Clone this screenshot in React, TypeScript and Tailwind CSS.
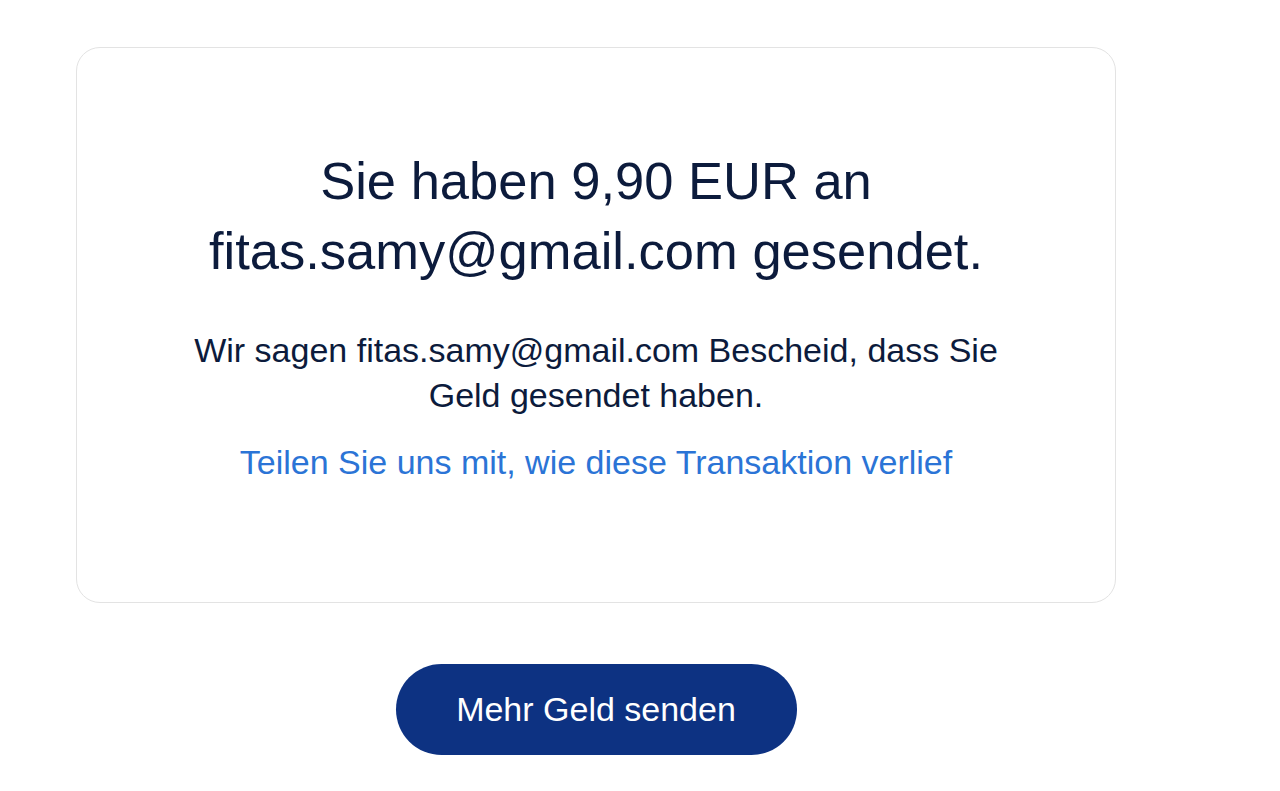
export default function App() {
  return (
    <div
      className="min-h-screen bg-white pl-[76px] pt-[47px]"
      style={{ fontFamily: '"Liberation Sans", Arial, sans-serif' }}
    >
      <div className="flex w-[1040px] flex-col items-center">
        <div className="flex h-[556px] w-full flex-col items-center rounded-[24px] border border-[#e3e3e3] pt-[98px] text-center">
          <h1 className="text-[52.5px] leading-[70px] font-normal text-[#0c1b3c]">
            Sie haben 9,90 EUR an
            <br />
            fitas.samy@gmail.com gesendet.
          </h1>
          <p className="mt-[42px] text-[34px] leading-[45px] text-[#0c1b3c]">
            Wir sagen fitas.samy@gmail.com Bescheid, dass Sie
            <br />
            Geld gesendet haben.
          </p>
          <a
            href="#"
            className="mt-[22px] text-[34px] leading-[45px] text-[#2b74d6]"
          >
            Teilen Sie uns mit, wie diese Transaktion verlief
          </a>
        </div>
        <button className="mt-[61px] h-[91px] w-[401px] rounded-full bg-[#0d3282] text-[34px] text-white">
          Mehr Geld senden
        </button>
      </div>
    </div>
  );
}
